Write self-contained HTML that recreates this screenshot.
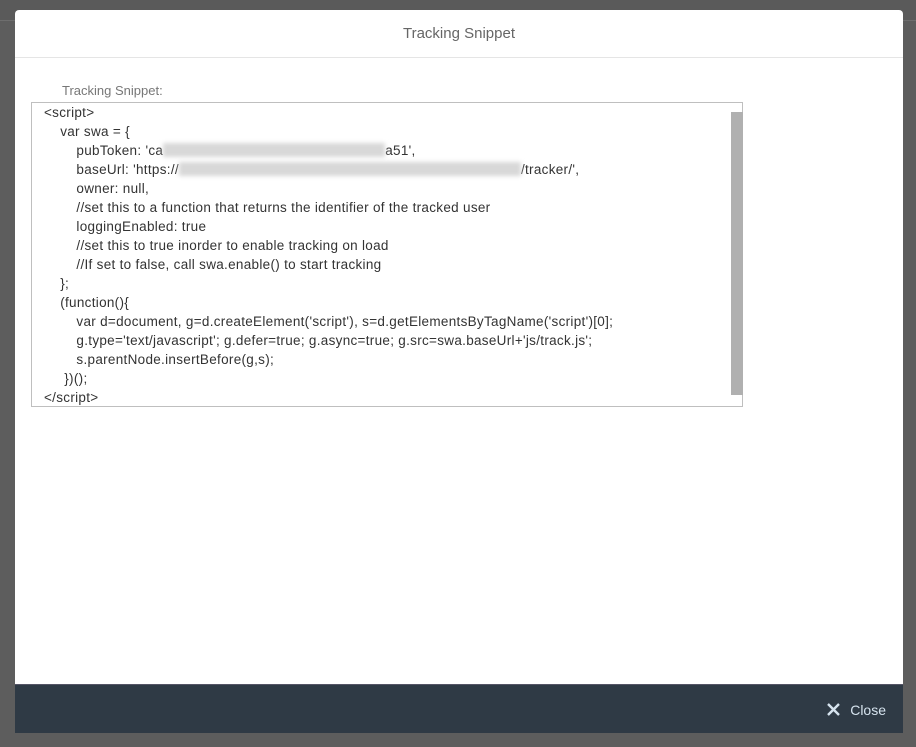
<!DOCTYPE html>
<html><head><style>
body{margin:0;width:916px;height:747px;background:#5d5d5d;position:relative;overflow:hidden;font-family:"Liberation Sans",sans-serif}
.top{position:absolute;left:0;top:0;width:916px;height:20px;background:#5a5a5a;border-bottom:1px solid #6e6e6e}
.dlg{position:absolute;left:15px;top:10px;width:888px;height:723px;background:#fff;border-radius:4px 4px 0 0;overflow:hidden}
.hdr{height:47px;border-bottom:1px solid #e5e5e5;text-align:center;line-height:48px;font-size:15px;color:#666}
.lbl{position:absolute;left:47px;top:73px;font-size:13px;color:#777}
.ta{position:absolute;left:16px;top:92px;width:710px;height:303px;border:1px solid #bfbfbf}
.sb{position:absolute;left:699px;top:9px;width:12px;height:283px;background:#b0b0b0}
.code{position:absolute;left:12px;top:0;font-size:13.5px;letter-spacing:0.3px;color:#333;line-height:19px;white-space:pre}
.blur{display:inline-block;height:14px;vertical-align:-2px;background:#d8d8d8;filter:blur(2px)}
.ftr{position:absolute;left:0;bottom:0;width:888px;height:48px;background:#2f3a45;border-top:1px solid #556}
.close{position:absolute;right:17px;top:17px;color:#d6e3ee;font-size:14px}
</style></head><body>
<div class="top"></div>
<div class="dlg">
<div class="hdr">Tracking Snippet</div>
<div class="lbl">Tracking Snippet:</div>
<div class="ta">
<div class="code">&lt;script&gt;
    var swa = {
        pubToken: 'ca<span class="blur" style="width:222px"></span>a51',
        baseUrl: 'https://<span class="blur" style="width:342px"></span>/tracker/',
        owner: null,
        //set this to a function that returns the identifier of the tracked user
        loggingEnabled: true
        //set this to true inorder to enable tracking on load
        //If set to false, call swa.enable() to start tracking
    };
    (function(){
        var d=document, g=d.createElement('script'), s=d.getElementsByTagName('script')[0];
        g.type='text/javascript'; g.defer=true; g.async=true; g.src=swa.baseUrl+'js/track.js';
        s.parentNode.insertBefore(g,s);
     })();
&lt;/script&gt;</div>
<div class="sb"></div>
</div>
<div class="ftr"><div class="close"><svg width="13" height="13" viewBox="0 0 13 13" style="vertical-align:-1px;margin-right:10px"><path d="M1 1L12 12M12 1L1 12" stroke="#d6e3ee" stroke-width="2.4"/></svg>Close</div></div>
</div>
</body></html>
